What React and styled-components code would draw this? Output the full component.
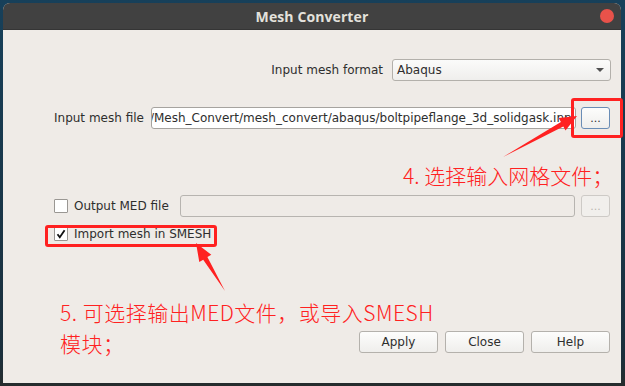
import React from 'react'
import styled, { createGlobalStyle } from 'styled-components'

const RED = '#ff2121'

const GlobalStyle = createGlobalStyle`
  html, body {
    margin: 0;
    padding: 0;
    background: #173a50;
  }
  body {
    font-family: "DejaVu Sans", "Liberation Sans", sans-serif;
  }
`

const Desktop = styled.div`
  position: relative;
  width: 625px;
  height: 386px;
  box-sizing: border-box;
  padding: 3px 4px 3px 3px;
  background: linear-gradient(#17405a, #1b2f3c 92%, #262c2d);
  overflow: hidden;
`

const Window = styled.div`
  width: 618px;
  height: 380px;
  display: flex;
  flex-direction: column;
  border-radius: 7px 7px 0 0;
  overflow: hidden;
  background: #efebe7;
`

const TitleBar = styled.div`
  height: 26px;
  flex: 0 0 auto;
  display: grid;
  grid-template-columns: 1fr auto 1fr;
  align-items: center;
  background: #414141;
  border-bottom: 1px solid #353535;
`

const Title = styled.div`
  grid-column: 2;
  font-family: "Open Sans", "DejaVu Sans", sans-serif;
  font-weight: 700;
  font-size: 14px;
  color: #e4e1dc;
  letter-spacing: 0.1px;
`

const CloseDot = styled.div`
  grid-column: 3;
  justify-self: end;
  width: 14px;
  height: 14px;
  margin-right: 7px;
  border-radius: 50%;
  background: #e8524a;
`

const Body = styled.div`
  flex: 1;
  display: flex;
  flex-direction: column;
  padding: 29px 10px 30px 51px;
  font-size: 12px;
  color: #2e2e2e;
`

const Row = styled.div`
  display: flex;
  align-items: center;
  height: ${p => p.$h || 22}px;
  margin-top: ${p => p.$mt || 0}px;
  justify-content: ${p => (p.$end ? 'flex-end' : 'flex-start')};
  padding-right: ${p => p.$pr || 0}px;
  gap: ${p => p.$gap || 0}px;
`

const Label = styled.span`
  white-space: nowrap;
  margin-right: ${p => p.$mr || 0}px;
`

const Combo = styled.div`
  position: relative;
  width: 219px;
  height: 22px;
  box-sizing: border-box;
  margin-left: 9px;
  display: flex;
  align-items: center;
  padding-left: 4px;
  border: 1px solid #b3b0ab;
  border-radius: 3px;
  background: linear-gradient(#fbfbfa, #efeeec);
  color: #2e2e2e;
`

const ComboArrow = styled.span`
  position: absolute;
  right: 6px;
  top: 8px;
  width: 0;
  height: 0;
  border-left: 4px solid transparent;
  border-right: 4px solid transparent;
  border-top: 4px solid #505050;
`

const Field = styled.div`
  width: ${p => p.$w}px;
  height: 22px;
  box-sizing: border-box;
  display: flex;
  align-items: center;
  overflow: hidden;
  white-space: nowrap;
  border: 1px solid ${p => (p.$disabled ? '#b7b4b0' : '#a6a39f')};
  border-radius: 3px;
  background: ${p => (p.$disabled ? '#efebe7' : '#ffffff')};
  color: #2e2e2e;
`

const FieldText = styled.span`
  margin-left: -2px;
`

const Button = styled.div`
  width: ${p => p.$w}px;
  height: 22px;
  box-sizing: border-box;
  flex: 0 0 auto;
  margin-left: ${p => p.$ml || 0}px;
  display: flex;
  align-items: center;
  justify-content: center;
  border: 1px solid ${p => (p.$focus ? '#6a8db6' : p.$disabled ? '#cdcac6' : '#b4b1ac')};
  border-radius: 3px;
  background: ${p => (p.$disabled ? '#f1efec' : 'linear-gradient(#fdfdfc, #efeeec)')};
  color: ${p => (p.$disabled ? '#b9b6b1' : '#2e2e2e')};
  font-size: ${p => (p.$small ? 11 : 12)}px;
`

const CheckBox = styled.div`
  width: 12px;
  height: 12px;
  margin-right: 6px;
  flex: 0 0 auto;
  display: flex;
  align-items: center;
  justify-content: center;
  border: 1px solid #9a9793;
  border-radius: 1px;
  background: #fff;
`

const Spacer = styled.div`
  flex: 1;
`

const Overlay = styled.svg`
  position: absolute;
  left: 0;
  top: 0;
  pointer-events: none;
`

const Note = styled.div`
  position: absolute;
  left: ${p => p.$x}px;
  top: ${p => p.$y}px;
  font-family: "Noto Sans CJK SC", "Noto Sans", sans-serif;
  font-weight: 300;
  font-size: 21px;
  line-height: 31px;
  letter-spacing: ${p => p.$ls || 0}px;
  color: ${RED};
  white-space: nowrap;
`

const Mark = styled.div`
  position: absolute;
  left: ${p => p.$x}px;
  top: ${p => p.$y}px;
  width: ${p => p.$w}px;
  height: ${p => p.$h}px;
  box-sizing: border-box;
  border: 3px solid ${RED};
  border-radius: 3px;
  pointer-events: none;
`

const arrowPoints = (tail, tip, headLen, headHalf, shaftHalf) => {
  const dx = tip[0] - tail[0]
  const dy = tip[1] - tail[1]
  const len = Math.hypot(dx, dy)
  const ux = dx / len
  const uy = dy / len
  const px = -uy
  const py = ux
  const bx = tip[0] - ux * headLen
  const by = tip[1] - uy * headLen
  const pts = [
    tail,
    [bx + px * shaftHalf, by + py * shaftHalf],
    [bx + px * headHalf, by + py * headHalf],
    tip,
    [bx - px * headHalf, by - py * headHalf],
    [bx - px * shaftHalf, by - py * shaftHalf],
  ]
  return pts.map(p => p.map(v => v.toFixed(1)).join(',')).join(' ')
}

const Check = () => (
  <svg width="10" height="10" viewBox="0 0 10 10">
    <path d="M1.5 5.2 L3.8 8.3 L8.6 1.2" fill="none" stroke="#111" strokeWidth="1.8" />
  </svg>
)

const App = () => (
  <Desktop>
    <GlobalStyle />
    <Window>
      <TitleBar>
        <Title>Mesh Converter</Title>
        <CloseDot />
      </TitleBar>
      <Body>
        <Row $end>
          <Label>Input mesh format</Label>
          <Combo>
            Abaqus
            <ComboArrow />
          </Combo>
        </Row>
        <Row $mt={26} $pr={1}>
          <Label $mr={7}>Input mesh file</Label>
          <Field $w={425}>
            <FieldText>/Mesh_Convert/mesh_convert/abaqus/boltpipeflange_3d_solidgask.inp</FieldText>
          </Field>
          <Spacer />
          <Button $w={29} $focus $small>...</Button>
        </Row>
        <Row $mt={66} $pr={1}>
          <CheckBox />
          <Label>Output MED file</Label>
          <Spacer />
          <Field $w={395} $disabled />
          <Button $w={29} $ml={6} $disabled $small>...</Button>
        </Row>
        <Row $mt={7} $h={20}>
          <CheckBox>
            <Check />
          </CheckBox>
          <Label>Import mesh in SMESH</Label>
        </Row>
        <Spacer />
        <Row $end $pr={1} $gap={7}>
          <Button $w={79}>Apply</Button>
          <Button $w={79}>Close</Button>
          <Button $w={79}>Help</Button>
        </Row>
      </Body>
    </Window>

    <Mark $x={571} $y={98} $w={52} $h={40} />
    <Mark $x={45} $y={225} $w={172} $h={22} />
    <Overlay width="625" height="386">
      <polygon points={arrowPoints([503, 157], [577, 116], 17, 7, 2.5)} fill={RED} />
      <polygon points={arrowPoints([225, 291], [196, 243], 18, 7, 2.5)} fill={RED} />
    </Overlay>
    <Note $x={403} $y={160}>4. 选择输入网格文件；</Note>
    <Note $x={60} $y={297} $ls={0.5}>
      5. 可选择输出MED文件，或导入SMESH
      <br />
      模块；
    </Note>
  </Desktop>
)

export default App
